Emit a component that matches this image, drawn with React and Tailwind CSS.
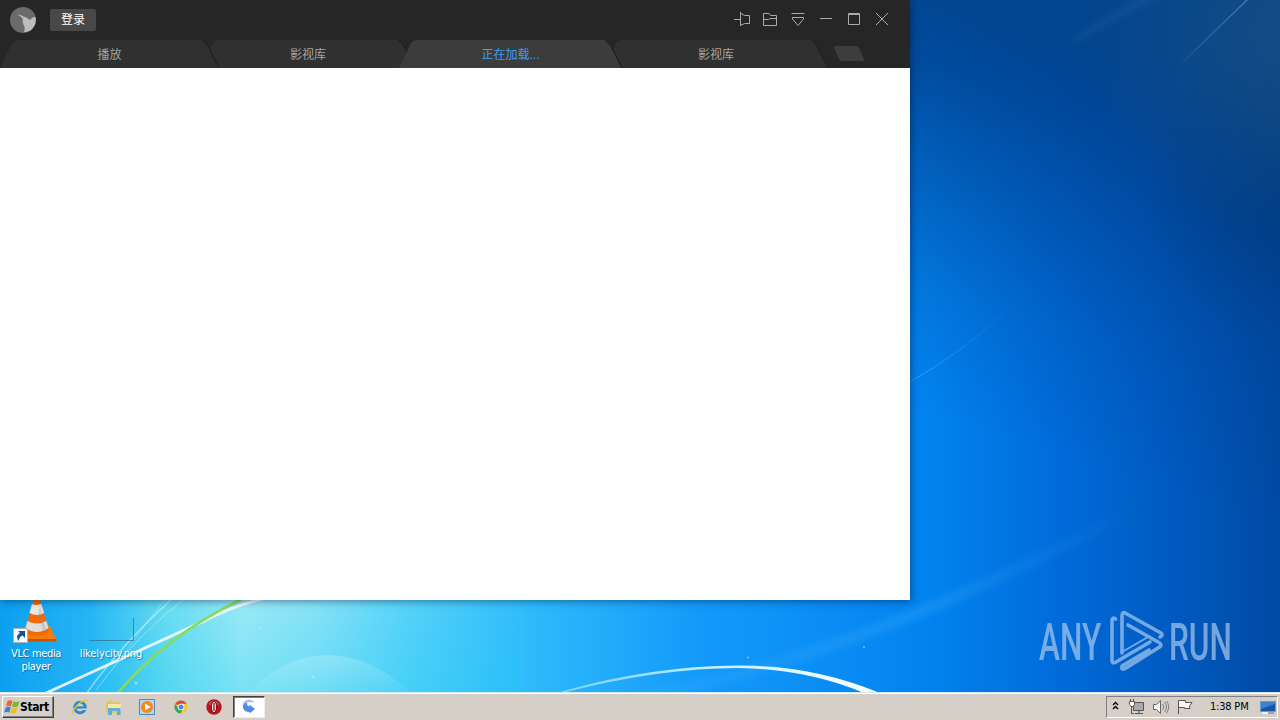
import { memo } from 'react';

const tabs = [
  { id: 1, label: '播放', box: 'w-[219px] z-10', shape: 219 },
  { id: 2, label: '影视库', box: 'w-[214px] -ml-[18px]', shape: 214 },
  { id: 3, label: '正在加载...', box: 'w-[223px] -ml-[16px] z-20', shape: 223, active: true },
  { id: 4, label: '影视库', box: 'w-[224px] -ml-[18px]', shape: 224 }
];

const Wallpaper = memo(function Wallpaper() {
  return (
    <svg className="absolute inset-0" width="1280" height="720" viewBox="0 0 1280 720" aria-hidden="true">
      <defs>
        <linearGradient id="base" x1="0" x2="1280" y1="0" y2="0" gradientUnits="userSpaceOnUse">
          <stop offset="0" stopColor="#0c9ff0" />
          <stop offset="0.07" stopColor="#25b5f5" />
          <stop offset="0.13" stopColor="#68dcf2" />
          <stop offset="0.19" stopColor="#9aeaf6" />
          <stop offset="0.25" stopColor="#84e1f7" />
          <stop offset="0.32" stopColor="#55d2f9" />
          <stop offset="0.42" stopColor="#2cb9fb" />
          <stop offset="0.55" stopColor="#1399fa" />
          <stop offset="0.72" stopColor="#0284f0" />
          <stop offset="0.83" stopColor="#006bd9" />
          <stop offset="0.92" stopColor="#0059bf" />
          <stop offset="1" stopColor="#004aa3" />
        </linearGradient>
        <linearGradient id="shade" x1="950" x2="1070" y1="420" y2="40" gradientUnits="userSpaceOnUse">
          <stop offset="0" stopColor="#00418f" stopOpacity="0" />
          <stop offset="0.3" stopColor="#00418f" stopOpacity="0.2" />
          <stop offset="0.6" stopColor="#00418f" stopOpacity="0.55" />
          <stop offset="0.85" stopColor="#00418f" stopOpacity="0.85" />
          <stop offset="1" stopColor="#02438c" stopOpacity="0.95" />
        </linearGradient>
        <radialGradient id="corner" cx="1290" cy="30" r="210" gradientUnits="userSpaceOnUse">
          <stop offset="0" stopColor="#1c5080" stopOpacity="0.7" />
          <stop offset="1" stopColor="#1c5080" stopOpacity="0" />
        </radialGradient>
        <radialGradient id="edge" cx="1290" cy="190" r="150" gradientUnits="userSpaceOnUse">
          <stop offset="0" stopColor="#003878" stopOpacity="0.6" />
          <stop offset="1" stopColor="#003878" stopOpacity="0" />
        </radialGradient>
        <linearGradient id="fadeDown" x1="0" x2="0" y1="600" y2="692" gradientUnits="userSpaceOnUse">
          <stop offset="0" stopColor="#14c8f0" stopOpacity="0" />
          <stop offset="1" stopColor="#14c8f0" stopOpacity="0.55" />
        </linearGradient>
        <linearGradient id="bubble" x1="0" x2="0" y1="655" y2="692" gradientUnits="userSpaceOnUse">
          <stop offset="0" stopColor="#fff" stopOpacity="0.2" />
          <stop offset="1" stopColor="#fff" stopOpacity="0.04" />
        </linearGradient>
        <linearGradient id="arc" x1="560" x2="880" y1="0" y2="0" gradientUnits="userSpaceOnUse">
          <stop offset="0" stopColor="#9fe3ff" stopOpacity="0.7" />
          <stop offset="0.5" stopColor="#c8f0ff" />
          <stop offset="1" stopColor="#fff" />
        </linearGradient>
        <linearGradient id="ray" x1="700" x2="1140" y1="0" y2="0" gradientUnits="userSpaceOnUse">
          <stop offset="0" stopColor="#56b9ff" stopOpacity="0.14" />
          <stop offset="0.5" stopColor="#56b9ff" stopOpacity="0.2" />
          <stop offset="1" stopColor="#56b9ff" stopOpacity="0" />
        </linearGradient>
        <linearGradient id="thinRay" x1="1183" x2="1249" y1="62" y2="0" gradientUnits="userSpaceOnUse">
          <stop offset="0" stopColor="#73a5d2" stopOpacity="0.1" />
          <stop offset="1" stopColor="#73a5d2" stopOpacity="0.5" />
        </linearGradient>
        <linearGradient id="sideRay" x1="910" x2="1010" y1="0" y2="0" gradientUnits="userSpaceOnUse">
          <stop offset="0" stopColor="#59c4fb" stopOpacity="0.5" />
          <stop offset="1" stopColor="#59c4fb" stopOpacity="0.05" />
        </linearGradient>
        <filter id="soft" x="-20%" y="-50%" width="140%" height="200%"><feGaussianBlur stdDeviation="3" /></filter>
        <filter id="slight"><feGaussianBlur stdDeviation="0.7" /></filter>
      </defs>
      <rect width="1280" height="720" fill="url(#base)" />
      <rect x="900" width="380" height="720" fill="url(#shade)" />
      <rect x="1120" y="30" width="160" height="320" fill="url(#edge)" />
      <rect x="1080" width="200" height="240" fill="url(#corner)" />
      <path d="M100 692V600H520V692Z" fill="url(#fadeDown)" opacity="0.45" />
      {/* light beams */}
      <g fill="none" strokeLinecap="round">
        <path d="M640 698Q880 650 1140 505" stroke="url(#ray)" strokeWidth="12" filter="url(#soft)" />
        <path d="M1075 40Q1120 12 1160 -8" stroke="#6aa2cf" strokeOpacity="0.1" strokeWidth="6" filter="url(#soft)" />
        <path d="M1183 62L1249 -2" stroke="url(#thinRay)" strokeWidth="1.500" />
        <path d="M910 382Q960 354 1010 308" stroke="url(#sideRay)" />
        <path d="M44 694Q145 648 202 622Q230 607 262 599" stroke="#fff" strokeOpacity="0.85" strokeWidth="3" filter="url(#slight)" />
        <path d="M86 694Q122 644 172 599" stroke="#e4fbff" strokeOpacity="0.55" strokeWidth="1.400" />
        <path d="M96 690Q134 638 184 599" stroke="#e4fbff" strokeOpacity="0.45" />
        <path d="M120 660Q146 622 166 599" stroke="#e4fbff" strokeOpacity="0.3" />
        <path d="M117 694Q165 636 242 599" stroke="#86dc5c" strokeWidth="2.600" />
      </g>
      <path d="M248 692Q285 655 328 655Q372 656 410 692Z" fill="url(#bubble)" />
      <path d="M560 692Q650 666 738 665.500Q813 665 880 693L864 693Q806 669 738 668Q660 668 566 692Z" fill="url(#arc)" filter="url(#slight)" />
      <g fill="#bdefff" fillOpacity="0.6">
        <circle cx="313" cy="677" r="1.300" />
        <circle cx="260" cy="628" r="1" />
        <circle cx="748" cy="657.500" r="1" />
        <circle cx="864" cy="647" r="1" />
        <circle cx="136" cy="683" r="1.500" />
      </g>
    </svg>
  );
});

const AppLogo = () => (
  <svg className="w-[26px] h-[26px]" viewBox="0 0 26 26" aria-hidden="true">
    <circle cx="13" cy="13" r="13" fill="#6b6b6b" />
    <path d="M7.500 7.800Q10.500 7.300 13 9.200Q16 10 20 13Q23 9 25.500 10.200Q27 17 21 23Q17.500 25.300 14 25Q15.500 21 13.500 17.500Q12.200 15 12.800 12Q11.500 9 7.500 7.800Z" fill="#bdbdbd" />
  </svg>
);

const WindowControls = () => (
  <svg className="w-[156px] h-5" viewBox="734 9 156 20" fill="none" stroke="#aaa" strokeWidth="1" aria-hidden="true">
    <path d="M734 19.500H740M740.500 12V26M740.500 13L744.500 15.500H749.500V23.500H744.500L740.500 25.500" />
    <path d="M763.500 25.500V13.500H769L770.500 15.500H776.500V25.500ZM763.500 19.500H768.500L770 18.500H776.500" />
    <path d="M791.500 13.500H804.500M792.500 17.500H803.500V19L798 25.500L792.500 19Z" />
    <path d="M820 18.500H832" />
    <path d="M848.500 13.500H859.500V24.500H848.500ZM848.500 14.500H859.500" />
    <path d="M876 13L888 25M888 13L876 25" />
  </svg>
);

function Tab({ label, box, shape, active }) {
  return (
    <button className={`relative h-7 shrink-0 text-xs leading-[29px] ${box} ${active ? 'text-[#3f9cf0]' : 'text-[#a3a3a3]'}`}>
      <svg className="absolute inset-0" width={shape} height="28" aria-hidden="true">
        <path
          d={`M0 28L11 5Q14 0 19 0H${shape - 19}Q${shape - 14} 0 ${shape - 11} 6L${shape} 28Z`}
          fill={active ? '#3c3c3c' : '#303030'}
        />
        <path d={`M${shape - 16} 1Q${shape - 13} 2 ${shape - 11} 6L${shape} 28`} stroke="#222" strokeWidth="1.500" fill="none" />
      </svg>
      <span className="relative top-px">{label}</span>
    </button>
  );
}

function PlayerWindow() {
  return (
    <div className="absolute left-0 top-0 w-[910px] h-[600px] flex flex-col bg-white shadow-[1px_1px_8px_rgba(0,20,50,0.5)]">
      <header className="h-[68px] bg-[#262626] shrink-0">
        <div className="h-10 flex items-center pl-2.5 pr-5">
          <AppLogo />
          <button className="ml-3.5 w-[46px] h-[22px] rounded-[2px] bg-[#484848] text-white text-xs leading-[21px]">登录</button>
          <div className="ml-auto -mt-0.5"><WindowControls /></div>
        </div>
        <nav className="flex h-7">
          {tabs.map(tab => (
            <Tab key={tab.id} {...tab} />
          ))}
          <svg className="ml-[5px] mt-[6px] w-8 h-4" viewBox="0 0 32 16" aria-hidden="true">
            <path d="M2 0H23Q25 0 26 2L31 13Q32 15 30 15H9Q7 15 6 13L1 2Q0 0 2 0Z" fill="#3d3d3d" />
          </svg>
        </nav>
      </header>
      <main className="flex-1 bg-white" />
    </div>
  );
}

function DesktopIcons() {
  return (
    <div className="absolute left-0 top-[600px] flex text-white text-[11px] leading-[13px] text-center [text-shadow:1px_1px_1px_rgba(0,50,100,0.5)]">
      <div className="w-[72px] flex flex-col items-center">
        <svg className="w-[46px] h-[44px] ml-[-2px]" viewBox="0 0 46 44" aria-hidden="true">
          <path d="M13 26H38L45 41H9Z" fill="#f47c0b" />
          <path d="M9 39H44.500V41.500H9Z" fill="#c75300" />
          <path d="M21.500 0H28L37 30Q36 36 25 36Q14 36 13 30Z" fill="#f26b08" />
          <path d="M20 4Q24 6 29.300 4L32 13Q25 17 17.500 13Z" fill="#e9e9e9" />
          <path d="M15.300 21Q25 26 34.300 21L36.500 28Q25 36 13.500 28Z" fill="#dedede" />
          <path d="M28 5L34 29L31 31L26 14Z" fill="#888" fillOpacity="0.25" />
          <path d="M1.500 28.500H15.500V42.500H1.500Z" fill="#f6faff" stroke="#9fb5c9" />
          <path d="M6 31H13V38L10.500 35.500Q7 36.500 7 41Q2.500 36 8 33Z" fill="#17518f" />
        </svg>
        <span className="mt-[3px] font-['DejaVu_Sans_Condensed','DejaVu_Sans',sans-serif] tracking-[-0.35px] w-[66px]">VLC media player</span>
      </div>
      <div className="w-[78px] flex flex-col items-center">
        <div className="mt-[18px] w-[45px] h-[23px] border-r border-b border-[#356b8b]/70" />
        <span className="mt-[6px] font-['DejaVu_Sans_Condensed','DejaVu_Sans',sans-serif] tracking-[-0.1px]">likelycity.png</span>
      </div>
    </div>
  );
}

const Watermark = () => (
  <svg className="absolute left-[1030px] top-[596px]" width="250" height="90" viewBox="1030 596 250 90" opacity="0.65" aria-label="ANY RUN">
    <g fill="#b5d0f1" fontFamily="Roboto, sans-serif" fontSize="51.500" fontWeight="500">
      <text transform="translate(1039 659.500) scale(0.61 1)" textLength="102" lengthAdjust="spacingAndGlyphs">ANY</text>
      <text transform="translate(1169 659.500) scale(0.61 1)" textLength="103" lengthAdjust="spacingAndGlyphs">RUN</text>
    </g>
    <g fill="none" stroke="#b5d0f1" strokeWidth="3.600" strokeLinejoin="round" strokeLinecap="round">
      <path d="M1115.500 619Q1112 616.500 1112 621V660Q1112 664.500 1116 662L1150 642" />
      <path d="M1122 653V616Q1122 611 1126 613.500L1161 633Q1163.500 635 1160 637" />
      <path d="M1128 625L1158 642Q1164 645 1158 648L1126 668Q1121 671 1122 666L1149 650" />
      <path d="M1122 652L1148 637" strokeWidth="2" />
    </g>
  </svg>
);

const quickLaunch = [
  {
    name: 'Internet Explorer',
    icon: (
      <>
        <circle cx="8" cy="8.500" r="5.300" fill="none" stroke="#278bd0" strokeWidth="3" />
        <path d="M4 8.500H13" stroke="#278bd0" strokeWidth="2.300" />
        <path d="M10 10.300H15" stroke="#d4d0c8" strokeWidth="1.500" />
        <path d="M1.500 15Q-1 13 5 6.500Q13 -1 15.500 2" fill="none" stroke="#e8c63c" strokeWidth="1.400" />
      </>
    )
  },
  {
    name: 'Explorer',
    icon: (
      <>
        <path d="M0 3L5 1L7 3H14V14H0Z" fill="#e3c566" />
        <path d="M2 5H15V12H2Z" fill="#f7e9a4" />
        <path d="M2 9H14.500V16H11V12H6V16H2Z" fill="#62aed6" />
      </>
    )
  },
  {
    name: 'Media Player',
    icon: (
      <>
        <path d="M0.500 0.500H15.500V15.500H0.500Z" fill="#b4d4ef" stroke="#5089bf" />
        <circle cx="8" cy="8" r="6" fill="#f18a19" />
        <path d="M6 4.500L11.500 8L6 11.500Z" fill="#fff" />
      </>
    )
  },
  {
    name: 'Chrome',
    icon: (
      <>
        <circle cx="8" cy="8" r="6.500" fill="#f4c92f" />
        <path d="M8 8L2.300 4.800A6.500 6.500 0 0 1 13.700 4.800H8Z" fill="#db4b3f" />
        <path d="M2.300 4.800A6.500 6.500 0 0 0 7.500 14.500L10 9.500L8 8L5 9Z" fill="#38a457" />
        <circle cx="8" cy="8" r="3.300" fill="#fff" />
        <circle cx="8" cy="8" r="2.500" fill="#4a86e8" />
      </>
    )
  },
  {
    name: 'Opera',
    icon: (
      <>
        <circle cx="8" cy="8" r="7.700" fill="#b8161b" />
        <path d="M2 5Q8 -2 14 5Q8 8 2 5Z" fill="#e66b66" fillOpacity="0.5" />
        <ellipse cx="8" cy="8" rx="2.600" ry="5.700" fill="#e8e8e8" stroke="#741015" />
        <path d="M8 4V12" stroke="#a62b2d" strokeWidth="1.500" />
      </>
    )
  }
];

const StartLogo = () => (
  <svg className="w-4 h-4" viewBox="0 0 16 16" aria-hidden="true">
    <path d="M3.500 2Q6 0.500 8.500 2L7 7.300Q4.500 6 2 7.500Z" fill="#ed662b" />
    <path d="M9.500 2.500Q12.500 4 15.500 2L14 7.200Q11 9 8 7.500Z" fill="#78ba36" />
    <path d="M1.700 8.500Q4.500 7 6.800 8.300L5.300 13.500Q3 12.300 0 13.500Z" fill="#3684cb" />
    <path d="M7.700 8.800Q10.500 10.200 13.700 8.300L12 13.500Q9.500 15.500 6.300 14Z" fill="#f1bb27" />
  </svg>
);

function Taskbar() {
  return (
    <footer className="absolute left-0 bottom-0 w-full h-7 flex items-start bg-[#d5cfc7] border-t border-[#d5e8f2] shadow-[inset_0_1px_#fff] pt-[3px] pl-0.5 pr-0.5 text-black font-['DejaVu_Sans_Condensed','DejaVu_Sans',sans-serif]">
      <button className="w-[52px] h-[22px] flex items-center pl-px border border-t-white border-l-white border-r-[#404040] border-b-[#404040] shadow-[inset_-1px_-1px_#808080] text-[12px] font-bold tracking-[-0.4px]">
        <StartLogo />
        <span>Start</span>
      </button>
      <div className="flex gap-[17.500px] ml-[18px] mt-[3px]">
        {quickLaunch.map(item => (
          <svg key={item.name} className="w-4 h-4" viewBox="0 0 16 16" aria-label={item.name}>{item.icon}</svg>
        ))}
      </div>
      <button className="ml-[11px] w-8 h-[22px] bg-white border border-t-[#404040] border-l-[#404040] border-r-[#efeeec] border-b-[#efeeec] shadow-[inset_1px_1px_#808080] flex items-center justify-center">
        <svg className="w-4 h-4 -mt-px" viewBox="0 0 16 16" aria-hidden="true">
          <path d="M6 3Q5.500 7 8.500 7.500V5.500L14 10L8.500 14.500V13Q3 13 2 8.500Q1.500 4 6 3Z" fill="#4d8ce9" />
          <path d="M14 3.500Q10 -0.500 5 1.500Q1.500 3 1.500 7Q5 1.500 14 3.500Z" fill="#a3b8ed" />
        </svg>
      </button>
      <div className="ml-auto w-[172px] h-[22px] flex items-center border border-t-[#808080] border-l-[#808080] border-r-white border-b-white">
        <svg className="w-[90px] h-5" viewBox="1107 697 90 20" fill="none" aria-hidden="true">
          <path d="M1113 705L1115.500 702.500L1118 705M1113 709L1115.500 706.500L1118 709" stroke="#000" strokeWidth="1.400" />
          <path d="M1133.500 702.500H1143.500V710.500H1133.500Z" fill="#aaa" stroke="#555" />
          <path d="M1135 713.500H1143M1139 711V713M1131.500 706V713.500H1134" stroke="#555" />
          <path d="M1129.500 701.500H1134.500V704.500L1133 706.500H1131L1129.500 704.500ZM1130.500 701V699M1133.500 701V699" fill="#fff" stroke="#555" />
          <path d="M1153.500 704.500H1156.500L1160.500 700.500V713.500L1156.500 709.500H1153.500Z" fill="#f5f5f5" stroke="#666" />
          <path d="M1162.500 704Q1165 707 1162.500 710M1164.500 702Q1168.500 707 1164.500 712M1166.500 701Q1171 707 1166.500 713" stroke="#777" strokeWidth="0.900" />
          <path d="M1178.500 714V700.500H1185.500V702.500H1192L1189.500 706L1190 708.500H1184.500V707.500H1178.500" fill="#f8f8f8" stroke="#555" />
        </svg>
        <span className="ml-[13px] w-[42px] text-[11px] leading-5 tracking-[-0.2px] whitespace-nowrap">1:38 PM</span>
        <svg className="ml-2 w-4 h-4" viewBox="0 0 16 16" aria-hidden="true">
          <path d="M0.500 2.500H15.500V12.500H0.500Z" fill="#1554aa" stroke="#5e9ed8" />
          <path d="M1 3H15V5L1 10Z" fill="#3c82cd" />
          <path d="M2 14H8" stroke="#eaf3fb" strokeWidth="2" />
          <path d="M8 14H14" stroke="#777" />
        </svg>
      </div>
    </footer>
  );
}

export default function App() {
  return (
    <div className="relative w-[1280px] h-[720px] overflow-hidden select-none font-['Liberation_Sans','Noto_Sans_CJK_SC',sans-serif]">
      <Wallpaper />
      <DesktopIcons />
      <PlayerWindow />
      <Watermark />
      <Taskbar />
    </div>
  );
}
